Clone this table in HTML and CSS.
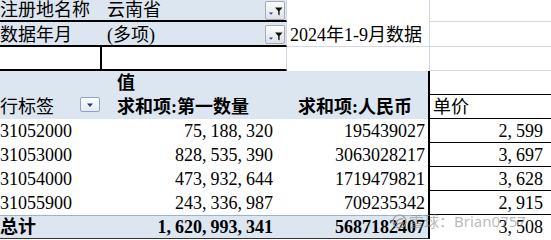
FILE: index.html
```html
<!DOCTYPE html>
<html lang="zh-CN">
<head>
<meta charset="utf-8">
<title>数据透视表</title>
<link rel="stylesheet" href="styles.css">
</head>
<body>
<div class="sheet">
  <!-- row 1 -->
  <div class="cell fill thick-b">注册地名称</div>
  <div class="cell fill thick-b grid-r pad-b1">云南省<span class="fbtn"><svg width="18" height="18" viewBox="0 0 18 18"><path d="M9 6.5H16.5L13.6 10V14.5L12.2 13.6V10Z" fill="#111"/><path d="M3 11.5H7L5 13.8Z" fill="#2642a0"/></svg></span></div>
  <div class="cell grid-r"></div>
  <div class="cell grid-b"></div>
  <!-- row 2 -->
  <div class="cell fill thick-b pt2">数据年月</div>
  <div class="cell fill thick-b grid-r pad-b1 pt2">(多项)<span class="fbtn"><svg width="18" height="18" viewBox="0 0 18 18"><path d="M9 6.5H16.5L13.6 10V14.5L12.2 13.6V10Z" fill="#111"/><path d="M3 11.5H7L5 13.8Z" fill="#2642a0"/></svg></span></div>
  <div class="cell grid-r grid-b pl3 pt2">2024年1-9月数据</div>
  <div class="cell grid-b"></div>
  <!-- row 3 -->
  <div class="cell thick-b thick-r"></div>
  <div class="cell thick-b grid-r"></div>
  <div class="cell grid-r"></div>
  <div class="cell grid-b"></div>
  <!-- row 4 -->
  <div class="cell fill"></div>
  <div class="cell fill bold pl15">值</div>
  <div class="cell fill edge"></div>
  <div class="cell line-b"></div>
  <!-- row 5 -->
  <div class="cell fill">行标签<span class="dd"><svg width="18" height="13" viewBox="0 0 18 13"><path d="M6 5.5H12L9 9Z" fill="#1f3a7a"/></svg></span></div>
  <div class="cell fill bold pl15">求和项:第一数量</div>
  <div class="cell fill bold edge right pr16">求和项:人民币</div>
  <div class="cell line-b pl3">单价</div>
  <!-- data -->
  <div class="cell">31052000</div>
  <div class="cell right pr14">75<span class="cm">,</span>188<span class="cm">,</span>320</div>
  <div class="cell right edge pr3">195439027</div>
  <div class="cell right line-b pr8">2<span class="cm">,</span>599</div>

  <div class="cell">31053000</div>
  <div class="cell right pr14">828<span class="cm">,</span>535<span class="cm">,</span>390</div>
  <div class="cell right edge pr3">3063028217</div>
  <div class="cell right line-b pr8">3<span class="cm">,</span>697</div>

  <div class="cell">31054000</div>
  <div class="cell right pr14">473<span class="cm">,</span>932<span class="cm">,</span>644</div>
  <div class="cell right edge pr3">1719479821</div>
  <div class="cell right line-b pr8">3<span class="cm">,</span>628</div>

  <div class="cell">31055900</div>
  <div class="cell right pr14">243<span class="cm">,</span>336<span class="cm">,</span>987</div>
  <div class="cell right edge pr3">709235342</div>
  <div class="cell right line-b pr8">2<span class="cm">,</span>915</div>
  <!-- total -->
  <div class="cell fill total bold">总计</div>
  <div class="cell fill total bold right pr14">1<span class="cm">,</span>620<span class="cm">,</span>993<span class="cm">,</span>341</div>
  <div class="cell fill total bold right edge pr3">5687182407</div>
  <div class="cell right pr8">3<span class="cm">,</span>508</div>

  <div class="watermark">
    <svg width="15" height="15" viewBox="0 0 15 15"><circle cx="7.5" cy="7.5" r="6.5" fill="none" stroke="#9a9a9a" stroke-width="1.2"/><path d="M3.5 9.5C5 6 8 4.5 11.5 5M4.5 11C7 9 9.5 8.5 12 9" fill="none" stroke="#9a9a9a" stroke-width="1.2"/></svg>
    <span>雪球：Brian0757</span>
  </div>
</div>
</body>
</html>
```
FILE: styles.css
```css
html, body {
  margin: 0;
  padding: 0;
  background: #ffffff;
}

.sheet {
  position: relative;
  display: grid;
  grid-template-columns: 102px 185px 143px 121px;
  grid-template-rows: 22px 25px 24px repeat(6, 24px) 24px;
  width: 551px;
  height: 240px;
  overflow: hidden;
  font-family: "Liberation Serif", "Noto Sans CJK SC", serif;
  font-size: 18px;
  line-height: 1;
  color: #000;
}

.cell {
  box-sizing: border-box;
  display: flex;
  align-items: center;
  white-space: nowrap;
  min-width: 0;
}

.fill { background: #dce6f1; }
.bold { font-weight: bold; }
.right { justify-content: flex-end; }

.thick-b { border-bottom: 2px solid #000; }
.thick-r { border-right: 2px solid #000; }
.grid-r { border-right: 1px solid #d0d7e5; }
.grid-b { border-bottom: 1px solid #d0d7e5; }
.line-b { border-bottom: 1px solid #000; }
.edge { border-right: 2px solid #000; }

.total {
  border-top: 1px solid #95b3d7;
  border-bottom: 1px solid #333;
}

.pad-b1 { padding-left: 5px; padding-right: 1px; }
.pt2 { padding-top: 2px; }
.pl3 { padding-left: 3px; }
.pl15 { padding-left: 15px; }
.pr3 { padding-right: 3px; }
.pr8 { padding-right: 8px; }
.pr14 { padding-right: 14px; }
.pr16 { padding-right: 16px; }

.cm { padding-right: 4px; }

.fbtn {
  box-sizing: border-box;
  margin-left: auto;
  width: 20px;
  height: 19px;
  border: 1px solid #a3abb6;
  border-radius: 2px;
  background: linear-gradient(#fdfdfd, #dde1e7);
  display: flex;
  align-items: center;
  justify-content: center;
}

.dd {
  box-sizing: border-box;
  margin-left: auto;
  margin-right: 2px;
  align-self: flex-start;
  margin-top: 2px;
  width: 20px;
  height: 15px;
  border: 1px solid #8fa3bf;
  border-radius: 2px;
  background: linear-gradient(#ffffff, #e3e9f2);
  display: flex;
  align-items: center;
  justify-content: center;
}

.watermark {
  position: absolute;
  left: 392px;
  top: 214px;
  display: flex;
  align-items: center;
  gap: 2px;
  font-family: "Noto Sans", "Noto Sans CJK SC", sans-serif;
  font-size: 15px;
  font-weight: normal;
  color: rgba(140, 140, 140, 0.6);
  pointer-events: none;
}
```
